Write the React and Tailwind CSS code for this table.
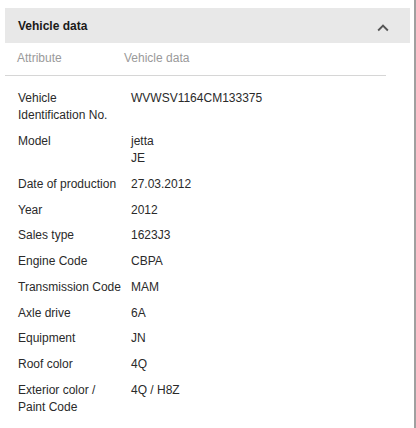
export default function App() {
  const rows = [
    ["Vehicle\nIdentification No.", "WVWSV1164CM133375"],
    ["Model", "jetta\nJE"],
    ["Date of production", "27.03.2012"],
    ["Year", "2012"],
    ["Sales type", "1623J3"],
    ["Engine Code", "CBPA"],
    ["Transmission Code", "MAM"],
    ["Axle drive", "6A"],
    ["Equipment", "JN"],
    ["Roof color", "4Q"],
    ["Exterior color /\nPaint Code", "4Q / H8Z"],
  ];

  return (
    <div className="w-[416px] h-[428px] bg-white font-['Liberation_Sans',Arial,sans-serif] text-[12px] leading-4">
      <div className="h-full border-r-2 border-[#a0a0a0] pt-2 pl-[5px] pr-[4px]">
        <div className="h-[35px] bg-[#e8e8e8] flex items-center justify-between pl-[13px] pr-[16px]">
          <span className="font-bold text-[#1a1a1a]">Vehicle data</span>
          <svg width="22" height="22" viewBox="0 0 24 24" className="mt-[4px]" fill="#555">
            <path d="M12 8l-6 6 1.41 1.41L12 10.83l4.59 4.58L18 14z" />
          </svg>
        </div>

        <div className="w-[381px]">
          <div className="flex pt-[7px] pb-[9px] border-b border-[#d6d6d6] text-[#9a9a9a]">
            <div className="w-[119px] pl-[12px]">Attribute</div>
            <div>Vehicle data</div>
          </div>
          <div className="pt-[10px] text-[#2a2a2a]">
            {rows.map(([label, value]) => (
              <div key={label} className="flex py-[4.375px] leading-[17px]">
                <div className="w-[126px] pl-[13px] whitespace-pre-line">{label}</div>
                <div className="whitespace-pre-line">{value}</div>
              </div>
            ))}
          </div>
        </div>
      </div>
    </div>
  );
}
